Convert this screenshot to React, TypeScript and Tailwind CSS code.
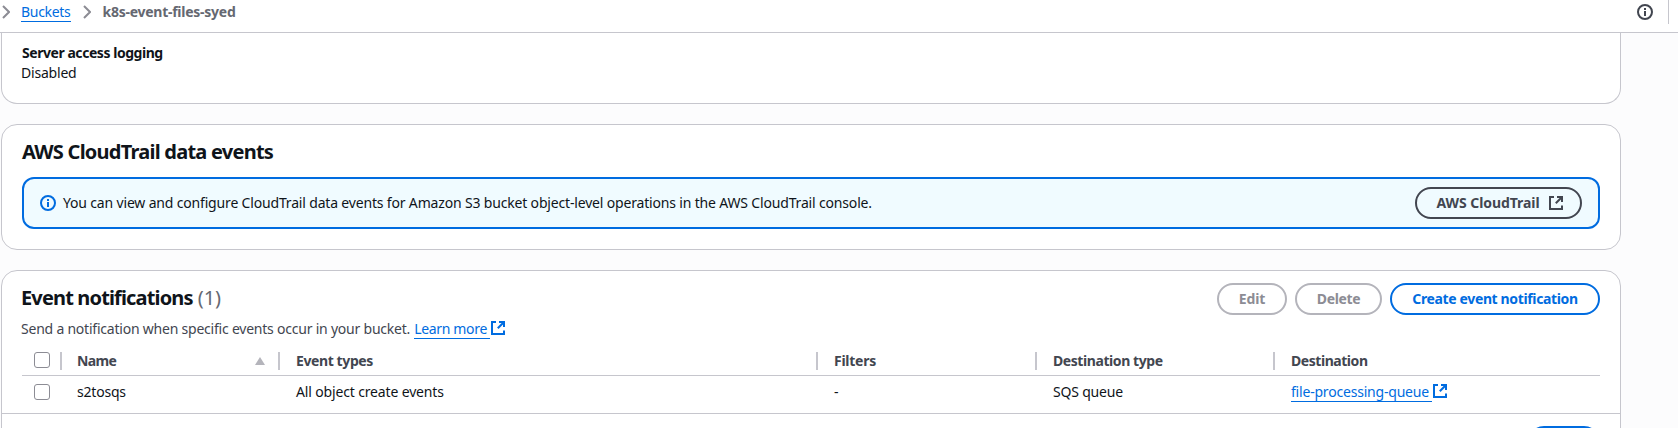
import type { ReactNode } from "react";

const bold = "font-bold";

function ExternalIcon({ className = "" }: { className?: string }) {
  return (
    <svg viewBox="0 0 14 14" className={`size-3.5 shrink-0 ${className}`} fill="none" stroke="currentColor" strokeWidth="2">
      <path d="M5 1H1v12h12V9.5" />
      <path d="M8 1h5v5" />
      <path d="M13 1 6.8 7.2" />
    </svg>
  );
}

function InfoIcon({ className = "" }: { className?: string }) {
  return (
    <svg viewBox="0 0 16 16" className={`size-4 shrink-0 ${className}`} fill="none" stroke="currentColor" strokeWidth="2">
      <circle cx="8" cy="8" r="7" />
      <path d="M8 7v5M8 4v2" />
    </svg>
  );
}

function Chevron() {
  return (
    <svg viewBox="0 0 8 14" className="h-3.5 w-2 shrink-0 text-[#8c8c94]" fill="none" stroke="currentColor" strokeWidth="2">
      <path d="M1 1l6 6-6 6" />
    </svg>
  );
}

function Button({ className, children }: { className: string; children?: ReactNode }) {
  return (
    <button className={`flex h-8 items-center justify-center rounded-full border-2 leading-5 whitespace-nowrap ${bold} ${className}`}>
      {children}
    </button>
  );
}

function Checkbox() {
  return <span className="size-4 rounded-[3px] border border-[#8c8c94] bg-white" />;
}

function HeaderCell({ className = "", last = false, children }: { className?: string; last?: boolean; children?: ReactNode }) {
  return (
    <div className={`flex h-[18px] items-center pl-4 text-[#424650] ${last ? "" : "border-r-2 border-[#c6c6cd]"} ${bold} ${className}`}>
      {children}
    </div>
  );
}

const columns = "grid grid-cols-[40px_218px_538px_219px_238px_1fr]";

export default function App() {
  return (
    <div className="flex h-[428px] w-[1678px] flex-col overflow-hidden bg-[#fcfcfd] font-['Noto_Sans',sans-serif] text-sm leading-5 text-[#0f141a]">
      <header className="flex h-[33px] shrink-0 items-start justify-between border-b border-[#c6c6cd] bg-white">
        <nav className="flex h-6 items-center pl-0.5">
          <Chevron />
          <a className="ml-[11px] h-[20px] border-b border-[#006ce0] leading-5 tracking-[-0.3px] text-[#006ce0]">Buckets</a>
          <span className="ml-3 flex"><Chevron /></span>
          <span className={`ml-3 leading-5 tracking-[-0.26px] text-[#656871] ${bold}`}>k8s-event-files-syed</span>
        </nav>
        <div className="flex h-6 items-center pr-[9px]">
          <InfoIcon className="mr-[15px] text-[#424650]" />
          <span className="h-6 w-px bg-[#c6c6cd]" />
        </div>
      </header>

      <main className="flex w-[1621px] flex-col gap-5 pl-px">
        <section className="h-[71px] shrink-0 rounded-b-2xl border border-t-0 border-[#c6c6cd] bg-white px-5 pt-[10px]">
          <div className={`tracking-[-0.45px] ${bold}`}>Server access logging</div>
          <div className="-ml-px tracking-[-0.2px]">Disabled</div>
        </section>

        <section className="h-[126px] shrink-0 rounded-2xl border border-[#c6c6cd] bg-white px-5 pt-[15px]">
          <h2 className={`text-xl leading-6 tracking-[-0.76px] ${bold}`}>AWS CloudTrail data events</h2>
          <div className="mt-[13px] flex h-[52px] items-center rounded-xl border-2 border-[#006ce0] bg-[#f0fbff] pr-4 pl-4">
            <InfoIcon className="text-[#006ce0]" />
            <span className="ml-[7px] flex-1 tracking-[-0.17px]">
              You can view and configure CloudTrail data events for Amazon S3 bucket object-level operations in the AWS CloudTrail console.
            </span>
            <Button className="w-[167px] border-[#424650] tracking-[-0.07px] text-[#424650]">
              <span className="ml-0.5">AWS CloudTrail</span>
              <ExternalIcon className="ml-[9px]" />
            </Button>
          </div>
        </section>

        <section className="h-[200px] shrink-0 rounded-2xl border border-[#c6c6cd] bg-white">
          <div className="flex h-[81px] justify-between px-5 pt-3">
            <div>
              <h2 className="flex pt-[3px] text-xl leading-6">
                <span className={`-ml-px tracking-[-0.85px] ${bold}`}>Event notifications</span>
                <span className="ml-[5px] text-[#656871]">(1)</span>
              </h2>
              <p className="mt-[9px] flex text-[#424650]">
                <span className="-ml-px tracking-[-0.22px]">Send a notification when specific events occur in your bucket.</span>
                <a className="ml-1 flex text-[#006ce0]">
                  <span className="h-5 border-b border-[#006ce0] pr-[3px] tracking-[-0.33px]">Learn more</span>
                  <ExternalIcon className="ml-px mt-[2px]" />
                </a>
              </p>
            </div>
            <div className="flex gap-2">
              <Button className="w-[70px] border-[#b4b4bb] tracking-[-0.1px] text-[#8c8c94]">Edit</Button>
              <Button className="w-[87px] border-[#b4b4bb] tracking-[-0.35px] text-[#8c8c94]">Delete</Button>
              <Button className="w-[210px] border-[#006ce0] tracking-[-0.36px] text-[#006ce0]">Create event notification</Button>
            </div>
          </div>

          <div className="px-5">
            <div className={`h-6 border-b border-[#c6c6cd] ${columns}`}>
              <HeaderCell className="!items-start !pl-3"><Checkbox /></HeaderCell>
              <HeaderCell className="justify-between pr-[13px] !pl-[15px] tracking-[-0.65px]">
                Name
                <svg viewBox="0 0 10 8" className="h-2 w-2.5 fill-[#b4b4bb]"><path d="M5 0l5 8H0z" /></svg>
              </HeaderCell>
              <HeaderCell className="tracking-[-0.4px]">Event types</HeaderCell>
              <HeaderCell className="tracking-[-0.26px]">Filters</HeaderCell>
              <HeaderCell className="tracking-[-0.42px]">Destination type</HeaderCell>
              <HeaderCell last className="tracking-[-0.45px]">Destination</HeaderCell>
            </div>
            <div className={`h-[37px] items-center pb-1.5 ${columns}`}>
              <div className="flex pl-3"><Checkbox /></div>
              <div className="pl-[15px] tracking-[-0.2px]">s2tosqs</div>
              <div className="pl-4 tracking-[-0.15px]">All object create events</div>
              <div className="pl-4">-</div>
              <div className="pl-4 tracking-[-0.2px]">SQS queue</div>
              <a className="flex pl-4 text-[#006ce0]">
                <span className="h-5 border-b border-[#006ce0] pr-[3px] tracking-[-0.2px]">file-processing-queue</span>
                <ExternalIcon className="ml-px mt-[2px]" />
              </a>
            </div>
          </div>
          <div className="flex justify-end border-t border-[#c6c6cd] pt-3 pr-5">
            <Button className="w-[72px] border-[#006ce0] text-[#006ce0]" />
          </div>
        </section>
      </main>
    </div>
  );
}
